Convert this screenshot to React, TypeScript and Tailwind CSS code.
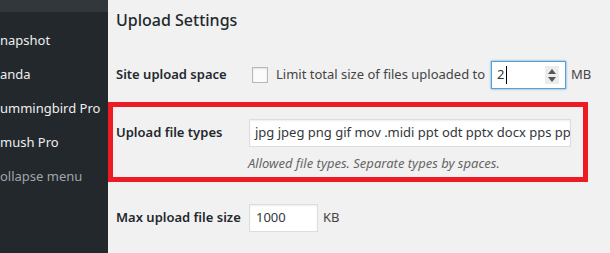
import React from "react";

const font = { fontFamily: '"Noto Sans", "Open Sans", sans-serif' };

function SideItem({ text, muted }: { text: string; muted?: boolean }) {
  return (
    <div
      className={`h-[34px] flex items-center whitespace-nowrap text-[13px] ${
        muted ? "text-[#a0a5aa]" : "text-[#eeeeee]"
      }`}
    >
      {text}
    </div>
  );
}

export default function App() {
  return (
    <div
      className="flex w-[610px] h-[253px] overflow-hidden bg-[#f1f1f1] text-[#444]"
      style={font}
    >
      <aside className="w-[108px] shrink-0 bg-[#23282d] flex flex-col overflow-hidden">
        <div className="h-[12px] bg-[#32373c]" />
        <div className="pt-[12px] flex flex-col">
          <SideItem text="napshot" />
          <SideItem text="anda" />
          <SideItem text="ummingbird Pro" />
          <SideItem text="mush Pro" />
          <SideItem text="ollapse menu" muted />
        </div>
      </aside>

      <main className="flex-1 flex flex-col">
        <h2 className="mt-[9px] h-[22px] pl-[8px] text-[16px] leading-[22px] font-medium text-[#23282d]">
          Upload Settings
        </h2>

        {/* Site upload space */}
        <div className="mt-[30px] h-[28px] pl-[8px] flex items-center">
          <div className="w-[133px] shrink-0 text-[13px] font-semibold text-[#23282d]">
            Site upload space
          </div>
          <div className="flex items-center">
            <span className="ml-[3px] w-[16px] h-[16px] border border-[#b4b9be] bg-[#fbfbfb] shadow-[inset_0_1px_2px_rgba(0,0,0,0.1)]" />
            <span className="ml-[8px] text-[13px] whitespace-nowrap">
              Limit total size of files uploaded to
            </span>
            <div className="ml-[6px] w-[75px] h-[28px] border border-[#5b9dd9] bg-white shadow-[0_0_2px_rgba(30,140,190,0.8)] flex items-center pl-[5px] pr-[6px]">
              <span className="text-[13px] text-[#32373c]">2</span>
              <span className="w-px h-[18px] bg-black ml-[1px]" />
              <span className="ml-auto w-[14px] h-[18px] bg-[#ececec] flex flex-col items-center justify-center gap-[3px]">
                <svg width="8" height="5" viewBox="0 0 8 5">
                  <path d="M0 5 L4 0 L8 5 Z" fill="#555" />
                </svg>
                <svg width="8" height="5" viewBox="0 0 8 5">
                  <path d="M0 0 L4 5 L8 0 Z" fill="#555" />
                </svg>
              </span>
            </div>
            <span className="ml-[5px] text-[13px]">MB</span>
          </div>
        </div>

        {/* Highlighted upload file types */}
        <div className="mt-[13px] w-[480px] h-[80px] border-[5px] border-[#ed1c24] pl-[3px] pt-[12px] flex flex-col">
          <div className="h-[28px] flex items-center">
            <div className="w-[133px] shrink-0 text-[13px] font-semibold text-[#23282d]">
              Upload file types
            </div>
            <div className="w-[322px] h-[28px] border border-[#dddddd] bg-white shadow-[inset_0_1px_2px_rgba(0,0,0,0.07)] flex items-center pl-[5px] overflow-hidden">
              <span className="text-[13px] text-[#32373c] whitespace-nowrap">
                jpg jpeg png gif mov .midi ppt odt pptx docx pps ppsx
              </span>
            </div>
          </div>
          <div className="mt-[7px] h-[18px] ml-[132px] text-[13px] leading-[18px] italic text-[#666]">
            Allowed file types. Separate types by spaces.
          </div>
        </div>

        {/* Max upload file size */}
        <div className="mt-[22px] h-[28px] pl-[8px] flex items-center">
          <div className="w-[133px] shrink-0 text-[13px] font-semibold text-[#23282d]">
            Max upload file size
          </div>
          <div className="w-[69px] h-[28px] border border-[#dddddd] bg-white shadow-[inset_0_1px_2px_rgba(0,0,0,0.07)] flex items-center pl-[6px]">
            <span className="text-[13px] text-[#32373c]">1000</span>
          </div>
          <span className="ml-[5px] text-[13px]">KB</span>
        </div>
      </main>
    </div>
  );
}
